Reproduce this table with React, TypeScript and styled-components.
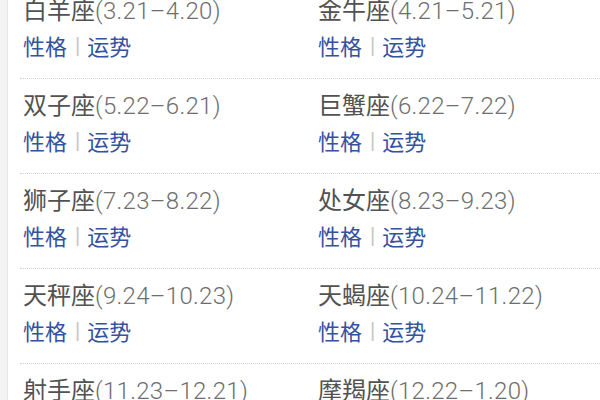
import React from "react";
import styled, { createGlobalStyle } from "styled-components";

const Global = createGlobalStyle`
  html, body { margin: 0; padding: 0; background: #fff; }
  body { font-family: "Liberation Sans", "Noto Sans CJK SC", sans-serif; overflow: hidden; }
`;

const Page = styled.div`
  display: flex;
  width: 600px;
  height: 400px;
  overflow: hidden;
  background: #fff;
`;

const Strip = styled.div`
  width: 7px;
  flex: none;
  background: #f3f3f3;
  border-right: 1px solid #e6e6e6;
`;

const List = styled.div`
  flex: 1;
  margin-left: 12px;
  margin-top: -16px;
`;

const Row = styled.div`
  display: grid;
  grid-template-columns: 295px 1fr;
  padding: 11px 0 19px 3px;
  border-bottom: 1px dotted #d2d2d2;
`;

const Cell = styled.div`
  display: flex;
  flex-direction: column;
  gap: 6px;
`;

const Title = styled.div`
  font-size: 24px;
  line-height: 28px;
  white-space: nowrap;
`;

const Name = styled.span`
  font-family: "Noto Sans CJK SC", sans-serif;
  color: #525252;
`;

const Dates = styled.span`
  font-family: Roboto, "Liberation Sans", sans-serif;
  font-weight: 300;
  letter-spacing: 0.3px;
  color: #6e6e6e;
`;

const Links = styled.div`
  font-family: "Noto Sans CJK SC", sans-serif;
  font-size: 22px;
  line-height: 28px;
  display: flex;
  align-items: center;
`;

const Link = styled.a`
  color: #33529f;
  text-decoration: none;
`;

const Bar = styled.span`
  color: #c6c6c6;
  font-family: "Liberation Sans", sans-serif;
  font-size: 20px;
  margin: 0 7px 0 8px;
`;

const signs: [string, string][] = [
  ["白羊座", "(3.21–4.20)"],
  ["金牛座", "(4.21–5.21)"],
  ["双子座", "(5.22–6.21)"],
  ["巨蟹座", "(6.22–7.22)"],
  ["狮子座", "(7.23–8.22)"],
  ["处女座", "(8.23–9.23)"],
  ["天秤座", "(9.24–10.23)"],
  ["天蝎座", "(10.24–11.22)"],
  ["射手座", "(11.23–12.21)"],
  ["摩羯座", "(12.22–1.20)"],
];

const Sign = ({ name, dates }: { name: string; dates: string }) => (
  <Cell>
    <Title>
      <Name>{name}</Name>
      <Dates>{dates}</Dates>
    </Title>
    <Links>
      <Link href="#">性格</Link>
      <Bar>|</Bar>
      <Link href="#">运势</Link>
    </Links>
  </Cell>
);

export default function App() {
  const rows: [string, string][][] = [];
  for (let i = 0; i < signs.length; i += 2) rows.push([signs[i], signs[i + 1]]);
  return (
    <Page>
      <Global />
      <Strip />
      <List>
        {rows.map((r, i) => (
          <Row key={i}>
            {r.map(([n, d]) => (
              <Sign key={n} name={n} dates={d} />
            ))}
          </Row>
        ))}
      </List>
    </Page>
  );
}
